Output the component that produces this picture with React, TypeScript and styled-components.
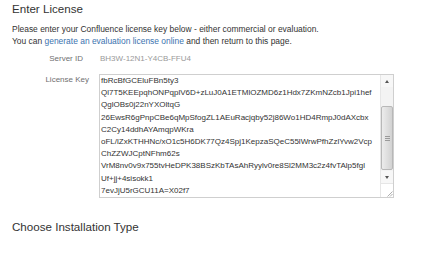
import React from "react";
import { createGlobalStyle, styled } from "styled-components";

const licenseKey = [
  "fbRcBfGCEluFBn5ty3",
  "Ql7T5KEEpqhONPqplV6D+zLuJ0A1ETMlOZMD6z1Hdx7ZKmNZcb1Jpi1hef",
  "QglOBs0j22nYXOltqG",
  "26EwsR6gPnpCBe6qMpSfogZL1AEuRacjqby52j86Wo1HD4RmpJ0dAXcbx",
  "C2Cy14ddhAYAmqpWKra",
  "oFL/lZxKTHHNc/xO1c5H6DK77Qz4Spj1KepzaSQeC55lWrwPfhZzlYvw2Vcp",
  "ChZZWJCptNFhm62s",
  "VrM8nv0v9x755tvHeDPK38BSzKbTAsAhRyylv0re8Sl2MM3c2z4fvTAlp5fgl",
  "Uf+jj+4sisokk1",
  "7evJjU5rGCU11A=X02f7",
].join("\n");

const GlobalStyle = createGlobalStyle`
  html, body {
    margin: 0;
    padding: 0;
    background: #fff;
  }
  body {
    font-family: "Liberation Sans", Arial, sans-serif;
    color: #333;
  }
`;

const StyledPage = styled.div`
  width: 437px;
  height: 254px;
  padding: 0 12px;
  box-sizing: border-box;
  overflow: hidden;
`;

const StyledHeading = styled.h2<{ $top: number }>`
  margin: ${p => p.$top}px 0 0 0;
  font-size: 11.6px;
  line-height: 14px;
  font-weight: normal;
  color: #333;
`;

const StyledIntro = styled.p`
  margin: 7px 0 0 0;
  font-size: 8.45px;
  line-height: 12px;
  color: #333;
`;

const StyledLink = styled.a`
  color: #3b73af;
  text-decoration: none;
`;

const StyledFieldRow = styled.div<{ $top: number }>`
  display: grid;
  grid-template-columns: 77px 1fr;
  column-gap: 10px;
  margin-top: ${p => p.$top}px;
  font-size: 8px;
  line-height: 12px;
`;

const StyledLabel = styled.label<{ $inset: number }>`
  text-align: right;
  padding-right: ${p => p.$inset}px;
  color: #707070;
`;

const StyledValue = styled.span`
  padding-left: 1px;
  color: #999;
`;

const StyledKeyBox = styled.div`
  display: flex;
  width: 295px;
  height: 124px;
  border: 1px solid #cfcfcf;
  box-sizing: border-box;
  background: #fff;
`;

const StyledKeyArea = styled.textarea`
  flex: 1;
  margin: 0;
  padding: 0 0 0 1px;
  border: none;
  outline: none;
  resize: none;
  overflow: hidden;
  font-family: "Liberation Sans", Arial, sans-serif;
  font-size: 8px;
  line-height: 12.2px;
  color: #333;
  background: transparent;
  white-space: pre;
`;

const StyledScrollbar = styled.div`
  display: flex;
  flex-direction: column;
  width: 12px;
  background: #f3f3f3;
  border-left: 1px solid #e6e6e6;
`;

const StyledArrow = styled.div<{ $down?: boolean }>`
  display: flex;
  align-items: center;
  justify-content: center;
  height: 12px;
  background: #f7f7f7;

  &::after {
    content: "";
    border-left: 2.5px solid transparent;
    border-right: 2.5px solid transparent;
    ${p =>
      p.$down
        ? "border-top: 3px solid #555;"
        : "border-bottom: 3px solid #555;"}
  }
`;

const StyledTrack = styled.div`
  flex: 1;
  display: flex;
  flex-direction: column;
  padding: 19px 0 1px;
`;

const StyledThumb = styled.div`
  flex: 1;
  display: flex;
  align-items: center;
  justify-content: center;
  border: 1px solid #b8b8b8;
  border-radius: 2px;
  background: linear-gradient(to right, #ececec, #d2d2d2);
`;

const StyledGrip = styled.div`
  width: 5px;
  height: 5px;
  background: repeating-linear-gradient(
    to bottom,
    #9a9a9a 0,
    #9a9a9a 1px,
    transparent 1px,
    transparent 2px
  );
`;

const StyledCorner = styled.div`
  height: 13px;
  background: #fff;
  border-top: 1px solid #e6e6e6;
  display: flex;
  align-items: flex-end;
  justify-content: flex-end;
`;

const ResizeGrip = () => (
  <svg width="7" height="7" viewBox="0 0 7 7">
    <path d="M6.5 1.5 L1.5 6.5 M6.5 4 L4 6.5" stroke="#999" strokeWidth="0.8" />
  </svg>
);

const App = () => {
  return (
    <StyledPage>
      <GlobalStyle />
      <StyledHeading $top={2}>Enter License</StyledHeading>
      <StyledIntro>
        Please enter your Confluence license key below - either commercial or
        evaluation.
        <br />
        You can <StyledLink href="#">generate an evaluation license online</StyledLink>{" "}
        and then return to this page.
      </StyledIntro>

      <StyledFieldRow $top={6}>
        <StyledLabel $inset={6}>Server ID</StyledLabel>
        <StyledValue>BH3W-12N1-Y4CB-FFU4</StyledValue>
      </StyledFieldRow>

      <StyledFieldRow $top={9}>
        <StyledLabel $inset={0}>License Key</StyledLabel>
        <StyledKeyBox>
          <StyledKeyArea readOnly wrap="off" value={licenseKey} />
          <StyledScrollbar>
            <StyledArrow />
            <StyledTrack>
              <StyledThumb>
                <StyledGrip />
              </StyledThumb>
            </StyledTrack>
            <StyledArrow $down />
            <StyledCorner>
              <ResizeGrip />
            </StyledCorner>
          </StyledScrollbar>
        </StyledKeyBox>
      </StyledFieldRow>

      <StyledHeading $top={22}>Choose Installation Type</StyledHeading>
    </StyledPage>
  );
};

export default App;
